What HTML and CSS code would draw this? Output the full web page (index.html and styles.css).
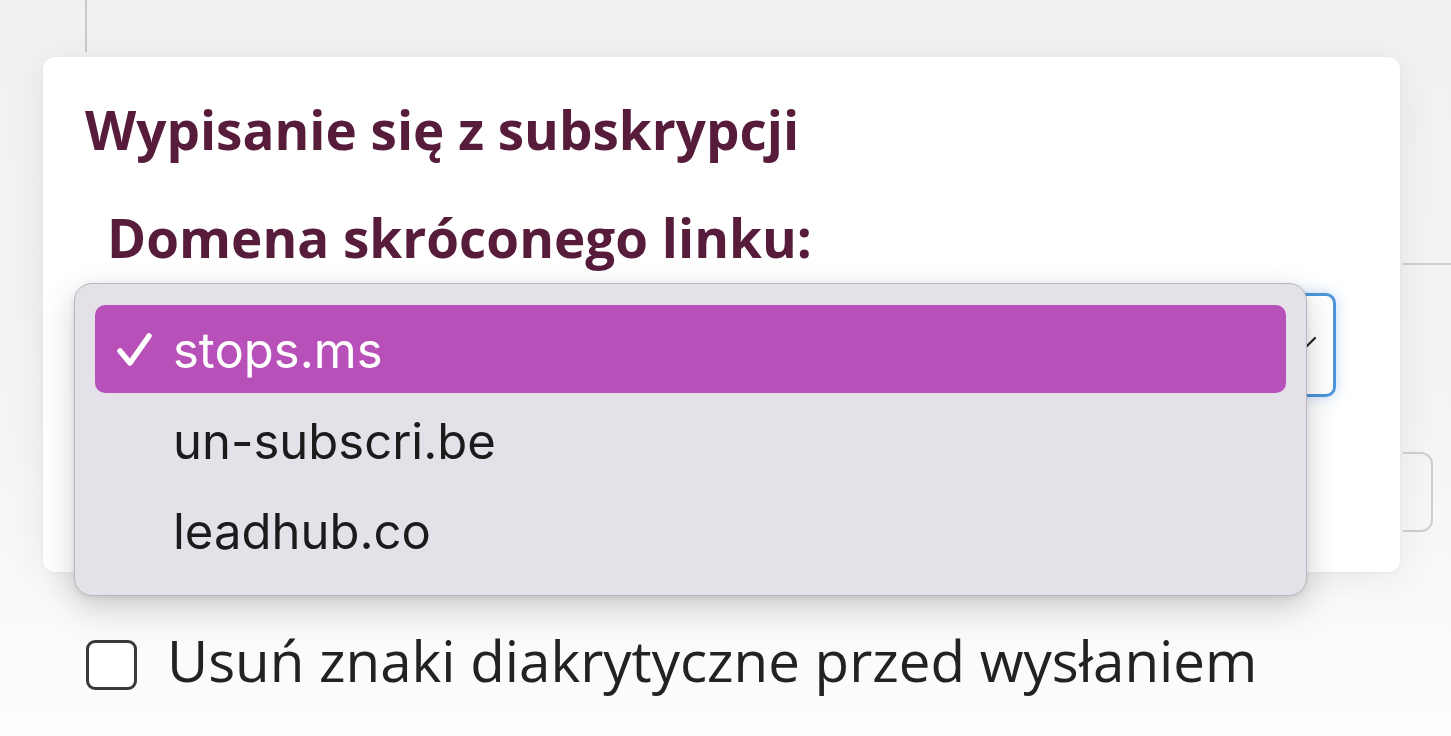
FILE: index.html
```html
<!DOCTYPE html>
<html lang="pl">
<head>
<meta charset="utf-8">
<title>Wypisanie się z subskrypcji</title>
<link rel="stylesheet" href="styles.css">
</head>
<body>
<div class="page">
  <div class="topline"></div>
  <div class="row">
    <section class="card">
      <h2 class="title">Wypisanie się z subskrypcji</h2>
      <div class="label">Domena skróconego linku:</div>
      <div class="select-wrap">
        <div class="select">
          <svg class="chevron" width="24" height="24" viewBox="0 0 24 24"><polyline points="4,8 12,16 20,8" fill="none" stroke="#222" stroke-width="2.2" stroke-linecap="round" stroke-linejoin="round"/></svg>
        </div>
        <div class="menu">
          <div class="item selected">
            <svg class="check" width="40" height="40" viewBox="0 0 40 40"><polyline points="5,21 15,33 34,6" fill="none" stroke="#fff" stroke-width="5.5" stroke-linecap="round" stroke-linejoin="round"/></svg>
            <span>stops.ms</span>
          </div>
          <div class="item"><span>un-subscri.be</span></div>
          <div class="item"><span>leadhub.co</span></div>
        </div>
      </div>
    </section>
    <aside class="side">
      <div class="side-line"></div>
      <div class="side-box"></div>
    </aside>
  </div>
  <label class="check-row">
    <span class="box"></span>
    <span class="check-text">Usuń znaki diakrytyczne przed wysłaniem</span>
  </label>
</div>
</body>
</html>
```

FILE: styles.css
```css
html, body {
  margin: 0;
  padding: 0;
}
body {
  width: 1451px;
  height: 736px;
  overflow: hidden;
  background: linear-gradient(#f1f1f1 0, #f4f4f4 420px, #fafafa 620px, #fdfdfd 736px);
  font-family: "Open Sans", "Noto Sans", sans-serif;
}
.page {
  padding-left: 43px;
}
.topline {
  margin-left: 42px;
  height: 52px;
  border-left: 2px solid #c9c9c9;
  margin-bottom: 5px;
}
.row {
  display: flex;
}
.card {
  box-sizing: border-box;
  width: 1357px;
  height: 515px;
  background: #fff;
  border-radius: 12px;
  padding: 45px 64px 0 42px;
  box-shadow: 0 6px 40px rgba(0, 0, 0, 0.07), 0 1px 4px rgba(0, 0, 0, 0.04);
  position: relative;
  z-index: 1;
}
.title {
  margin: 0;
  font-size: 53px;
  line-height: 56px;
  font-weight: 700;
  color: #561c3a;
}
.label {
  margin-top: 52px;
  padding-left: 22px;
  font-size: 53px;
  line-height: 56px;
  font-weight: 700;
  color: #561c3a;
}
.select-wrap {
  position: relative;
  margin-top: 27px;
}
.select {
  box-sizing: border-box;
  height: 104px;
  border: 3px solid #4d95dc;
  border-radius: 10px;
  box-shadow: 0 0 14px rgba(80, 150, 225, 0.35);
  display: flex;
  align-items: center;
  justify-content: flex-end;
  padding-right: 14px;
}
.chevron {
  margin-top: -6px;
}
.menu {
  position: absolute;
  top: -10px;
  left: -11px;
  box-sizing: border-box;
  width: 1233px;
  height: 313px;
  background: #e4e1e9;
  border: 1px solid #b8b7bd;
  border-radius: 18px;
  padding: 21px 20px;
  box-shadow: 0 12px 34px rgba(0, 0, 0, 0.18), 0 2px 6px rgba(0, 0, 0, 0.08);
  font-family: "Inter", "Liberation Sans", sans-serif;
}
.item {
  height: 90px;
  display: flex;
  align-items: center;
  padding-left: 78px;
  font-size: 49px;
  color: #1b1b1b;
  position: relative;
}
.item span {
  padding-top: 2px;
}
.item.selected {
  height: 88px;
  margin-bottom: 2px;
  background: #b750b8;
  border-radius: 10px;
  color: #fff;
}
.check {
  position: absolute;
  left: 20px;
  top: 25px;
}
.side {
  width: 51px;
  padding-top: 206px;
}
.side-line {
  margin-left: 3px;
  height: 2px;
  background: #cfcfcf;
}
.side-box {
  margin-top: 187px;
  margin-left: 3px;
  width: 28px;
  height: 76px;
  border: 2px solid #cfcfcf;
  border-left: none;
  border-radius: 0 12px 12px 0;
}
.check-row {
  display: flex;
  align-items: flex-start;
  gap: 30px;
  margin-top: 60px;
  margin-left: 43px;
}
.box {
  box-sizing: border-box;
  width: 51px;
  height: 50px;
  margin-top: 8px;
  border: 3px solid #3a3a3a;
  border-radius: 9px;
  background: #fff;
  flex: none;
}
.check-text {
  font-size: 56.5px;
  line-height: 58px;
  color: #222;
}
```
